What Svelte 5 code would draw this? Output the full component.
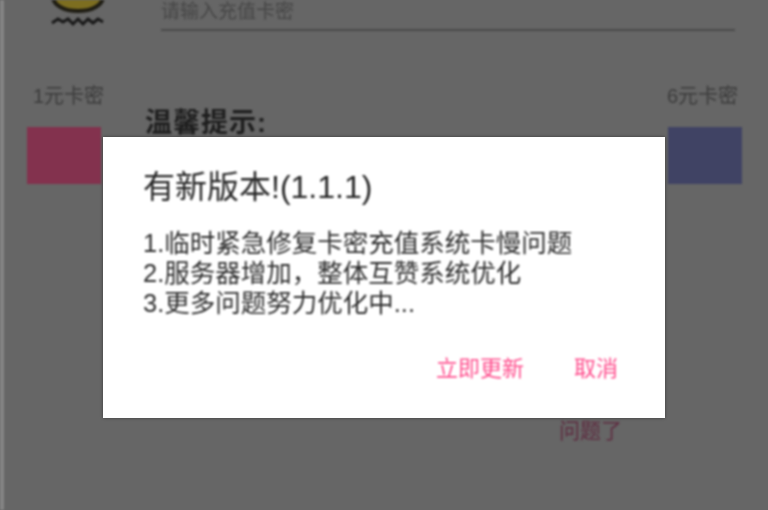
<script>
  const notes = [
    '1.临时紧急修复卡密充值系统卡慢问题',
    '2.服务器增加\uFF0C整体互赞系统优化',
    '3.更多问题努力优化中...'
  ];
</script>

<div class="page">
  <div class="top">
    <div class="logo">
      <svg width="60" height="30" viewBox="0 0 60 30">
        <ellipse cx="30" cy="-3" rx="25" ry="14" fill="#7d6e20" stroke="#1f1d14" stroke-width="4" />
        <path d="M4 23l6-4 5 3 5-3 5 5 5-5 5 5 5-5 5 4 5-4 5 3" fill="none" stroke="#191919" stroke-width="3" />
      </svg>
    </div>
    <div class="field">
      <span class="hint">请输入充值卡密</span>
    </div>
  </div>

  <div class="labels">
    <span>1元卡密</span>
    <span>6元卡密</span>
  </div>

  <div class="cards">
    <div class="card pink"></div>
    <div class="tip">温馨提示:</div>
    <div class="card blue"></div>
  </div>

  <div class="foot">问题了</div>
</div>

<div class="dialog">
  <h1>有新版本!(1.1.1)</h1>
  <div class="body">
    {#each notes as line}
      <p>{line}</p>
    {/each}
  </div>
  <div class="actions">
    <span>立即更新</span>
    <span>取消</span>
  </div>
</div>

<style>
  :global(body) {
    margin: 0;
    background: #666;
    overflow: hidden;
  }

  .page {
    height: 510px;
    box-sizing: border-box;
    border-left: 4px solid #858585;
    font-family: "Liberation Sans", "Noto Sans CJK SC", sans-serif;
    filter: blur(1.2px);
    overflow: hidden;
  }

  .top {
    display: flex;
    height: 32px;
    padding-left: 44px;
  }

  .logo {
    width: 60px;
    height: 30px;
  }

  .field {
    flex: 1;
    height: 31px;
    margin: 0 33px 0 53px;
    border-bottom: 2px solid #4a4a4a;
    box-sizing: border-box;
  }

  .hint {
    display: block;
    font-size: 19px;
    line-height: 24px;
    color: #464646;
  }

  .labels {
    display: flex;
    justify-content: space-between;
    padding: 52px 30px 0 29px;
    font-size: 20px;
    line-height: 24px;
    color: #3c3c3c;
  }

  .cards {
    display: flex;
    align-items: flex-start;
    padding: 7px 26px 0 23px;
    margin-top: 12px;
  }

  .card {
    width: 74px;
    height: 57px;
  }

  .pink {
    background: #83324e;
  }

  .blue {
    background: #404364;
  }

  .tip {
    flex: 1;
    margin: -20px 0 0 44px;
    font-size: 27px;
    font-weight: 700;
    line-height: 32px;
    letter-spacing: 1px;
    color: #1e1e1e;
  }

  .foot {
    margin: 234px 146px 0 0;
    text-align: right;
    font-size: 21px;
    line-height: 26px;
    color: #5e2c40;
  }

  .dialog {
    position: absolute;
    left: 103px;
    top: 137px;
    width: 562px;
    height: 281px;
    box-sizing: border-box;
    padding: 32px 40px 0;
    background: #fff;
    box-shadow: 0 0 3px rgba(0, 0, 0, 0.45);
    font-family: "Liberation Sans", "Noto Sans CJK SC", sans-serif;
  }

  h1 {
    margin: 0;
    font-size: 32px;
    font-weight: 400;
    line-height: 36px;
    color: #262626;
    filter: blur(0.9px);
  }

  .body {
    margin-top: 23px;
    font-size: 25.5px;
    line-height: 30px;
    color: #2e2e2e;
    filter: blur(0.9px);
  }

  p {
    margin: 0;
  }

  .actions {
    display: flex;
    justify-content: flex-end;
    gap: 50px;
    margin-top: 37px;
    padding-right: 7px;
    font-size: 22px;
    line-height: 28px;
    color: #ff4f8e;
    filter: blur(0.9px);
  }
</style>
